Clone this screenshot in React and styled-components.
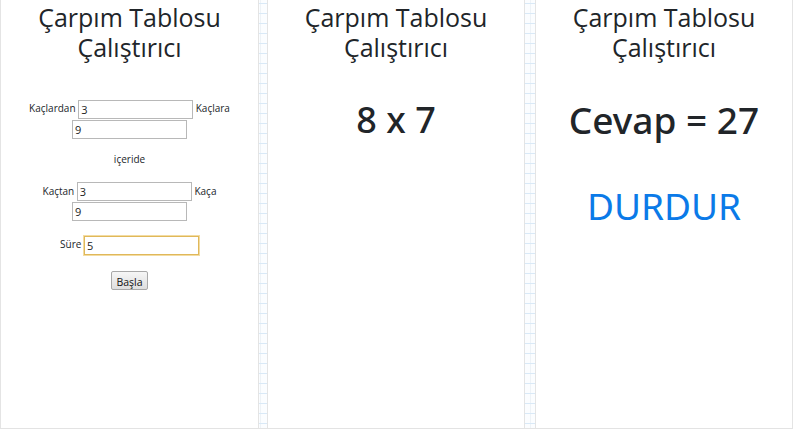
import React from "react";
import styled, { createGlobalStyle } from "styled-components";

const GlobalStyle = createGlobalStyle`
  html, body {
    margin: 0;
    padding: 0;
    width: 796px;
    height: 432px;
    overflow: hidden;
    font-family: "Open Sans", "Noto Sans", sans-serif;
    color: #212529;
    background-color: #fff;
  }
`;

const Board = styled.main`
  display: grid;
  grid-template-columns: 259px 266px 268px;
  width: 793px;
  height: 428px;
  background-color: #fbfdff;
  background-image:
    linear-gradient(#d9e9f7 1px, transparent 1px),
    linear-gradient(90deg, #eef3f7 1px, transparent 1px);
  background-size: 100% 10px, 10px 100%;
  background-position: 0 3px, 0 0;
  border-bottom: 1px solid #e3e3e3;
`;

const Panel = styled.section`
  display: flex;
  flex-direction: column;
  align-items: center;
  background: #fff;
  border-left: 1px solid #e4e4e4;
  border-right: 1px solid #e4e4e4;
  margin-left: ${(p) => p.$gap}px;
  padding-top: 2px;
`;

const Title = styled.h1`
  margin: 0;
  font-size: 25px;
  font-weight: 500;
  text-align: center;
`;

const TitleLine = styled.span`
  display: block;
  line-height: 30px;
`;

const Form = styled.form`
  margin-top: 37px;
  width: 220px;
  text-align: center;
  font-size: 10px;
  line-height: 19px;
`;

const Line = styled.div`
  margin-bottom: ${(p) => p.$after || 0}px;
`;

const Field = styled.input`
  box-sizing: border-box;
  width: 115px;
  height: 19px;
  margin: 0;
  padding: 0 2px;
  font: inherit;
  font-size: 11px;
  border: 1px solid ${(p) => (p.$focus ? "#e0b85a" : "#b8b8b8")};
  box-shadow: ${(p) => (p.$focus ? "0 0 0 1px #f3dca2" : "none")};
  outline: none;
  vertical-align: middle;
  background: #fff;
  color: #222;
`;

const Button = styled.button`
  font: inherit;
  font-size: 10.5px;
  padding: 1px 4px;
  height: 19px;
  border: 1px solid #a8a8a8;
  border-radius: 2px;
  background: linear-gradient(#f6f6f6, #dedede);
  color: #111;
`;

const Problem = styled.div`
  margin-top: ${(p) => p.$top}px;
  font-family: "Noto Sans", "Open Sans", sans-serif;
  font-size: ${(p) => p.$size}px;
  font-weight: ${(p) => p.$weight || 500};
  line-height: 1.2;
  color: ${(p) => p.$color || "#212529"};
`;

const Heading = () => (
  <Title>
    <TitleLine>Çarpım Tablosu</TitleLine>
    <TitleLine>Çalıştırıcı</TitleLine>
  </Title>
);

export default function App() {
  return (
    <>
      <GlobalStyle />
      <Board>
        <Panel $gap={0}>
          <Heading />
          <Form onSubmit={(e) => e.preventDefault()}>
            <Line $after={11}>
              Kaçlardan <Field defaultValue="3" /> Kaçlara <Field defaultValue="9" />
            </Line>
            <Line $after={13}>içeride</Line>
            <Line $after={14}>
              Kaçtan <Field defaultValue="3" /> Kaça <Field defaultValue="9" />
            </Line>
            <Line $after={16}>
              Süre <Field $focus defaultValue="5" />
            </Line>
            <Line>
              <Button type="button">Başla</Button>
            </Line>
          </Form>
        </Panel>
        <Panel $gap={8}>
          <Heading />
          <Problem $top={36} $size={36}>8 x 7</Problem>
        </Panel>
        <Panel $gap={10}>
          <Heading />
          <Problem $top={36} $size={37}>Cevap = 27</Problem>
          <Problem $top={42} $size={37} $weight={400} $color="#0b7ae8">
            DURDUR
          </Problem>
        </Panel>
      </Board>
    </>
  );
}
